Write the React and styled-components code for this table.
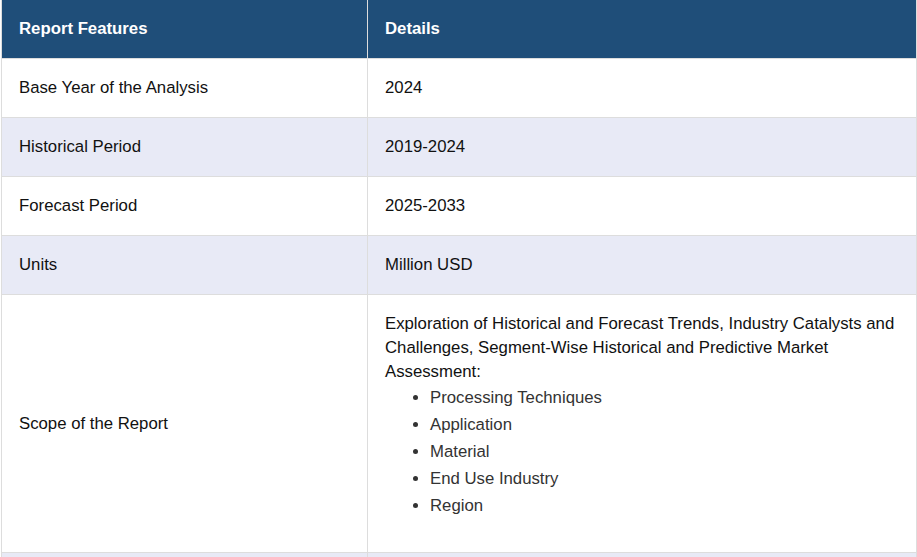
import React from "react";
import styled, { createGlobalStyle } from "styled-components";

const Global = createGlobalStyle`
  html, body { margin: 0; padding: 0; background: #fff; overflow: hidden; }
  body { font-family: "Liberation Sans", Arial, sans-serif; }
  *, *::before, *::after { box-sizing: border-box; }
`;

const Wrap = styled.div`
  padding-left: 1px;
  width: 917px;
`;

const Table = styled.table`
  width: 916px;
  border-collapse: collapse;
  table-layout: fixed;
  font-family: "Liberation Sans", Arial, sans-serif;
  font-size: 16.75px;
`;

const HeadCell = styled.th`
  background: #1f4e79;
  color: #fff;
  font-weight: bold;
  text-align: left;
  padding: 15px 17px;
  line-height: 28px;
  border: 1px solid #dddddd;
  border-top: none;
  width: ${(p) => p.$w || "auto"};
`;

const Row = styled.tr`
  background: ${(p) => (p.$alt ? "#e8eaf6" : "#ffffff")};
`;

const Cell = styled.td`
  color: #111;
  padding: 15px 17px;
  line-height: 28px;
  border: 1px solid #dddddd;
  vertical-align: middle;
`;

const Para = styled.p`
  margin: 2px 0 0 0;
  line-height: 24px;
  color: #111;
`;

const List = styled.ul`
  margin: 0 0 18px 0;
  padding-left: 45px;
`;

const Item = styled.li`
  line-height: 27px;
  color: #333;
`;

const rows = [
  ["Base Year of the Analysis", "2024"],
  ["Historical Period", "2019-2024"],
  ["Forecast Period", "2025-2033"],
  ["Units", "Million USD"],
];

const segments = [
  "Processing Techniques",
  "Application",
  "Material",
  "End Use Industry",
  "Region",
];

export default function App() {
  return (
    <>
      <Global />
      <Wrap>
        <Table>
          <thead>
            <tr>
              <HeadCell $w="366px">Report Features</HeadCell>
              <HeadCell>Details</HeadCell>
            </tr>
          </thead>
          <tbody>
            {rows.map(([k, v], i) => (
              <Row key={k} $alt={i % 2 === 1}>
                <Cell>{k}</Cell>
                <Cell>{v}</Cell>
              </Row>
            ))}
            <Row>
              <Cell>Scope of the Report</Cell>
              <Cell>
                <Para>
                  Exploration of Historical and Forecast Trends, Industry Catalysts and
                  Challenges, Segment-Wise Historical and Predictive Market Assessment:
                </Para>
                <List>
                  {segments.map((s) => (
                    <Item key={s}>{s}</Item>
                  ))}
                </List>
              </Cell>
            </Row>
            <Row $alt>
              <Cell />
              <Cell />
            </Row>
          </tbody>
        </Table>
      </Wrap>
    </>
  );
}
